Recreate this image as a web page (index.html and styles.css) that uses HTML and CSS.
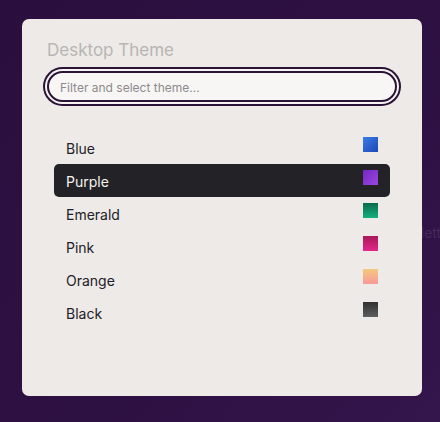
FILE: index.html
```html
<!DOCTYPE html>
<html lang="en">
<head>
    <meta charset="UTF-8">
    <meta name="viewport" content="width=device-width, initial-scale=1.0">
    <title>Desktop Theme</title>
    <link rel="stylesheet" href="styles.css">
</head>
<body>
    <span class="behind">Palette</span>
    <div class="panel">
        <h1 class="title">Desktop Theme</h1>
        <input type="text" class="filter" placeholder="Filter and select theme...">
        <ul class="themes">
            <li class="theme"><span>Blue</span><i class="swatch blue"></i></li>
            <li class="theme active"><span>Purple</span><i class="swatch purple"></i></li>
            <li class="theme"><span>Emerald</span><i class="swatch emerald"></i></li>
            <li class="theme"><span>Pink</span><i class="swatch pink"></i></li>
            <li class="theme"><span>Orange</span><i class="swatch orange"></i></li>
            <li class="theme"><span>Black</span><i class="swatch black"></i></li>
        </ul>
    </div>
</body>
</html>
```

FILE: styles.css
```css
html, body {
  height: 100%;
}

body {
  margin: 0;
  background: linear-gradient(135deg, #2a0f3e 0%, #2e1143 60%, #34154c 100%);
  font-family: Inter, "Noto Sans", sans-serif;
  padding: 19px 18px 0 22px;
  box-sizing: border-box;
  position: relative;
  overflow: hidden;
}

.behind {
  position: absolute;
  left: 404px;
  top: 224px;
  font-size: 14px;
  color: #46295d;
}

.panel {
  position: relative;
  width: 400px;
  height: 377px;
  box-sizing: border-box;
  background-color: #edeae7;
  border-radius: 7px;
  padding: 21px 25px;
}

.title {
  margin: 0;
  font-size: 17px;
  line-height: 20px;
  font-weight: 400;
  color: #b9b5b3;
}

.filter {
  display: block;
  width: 100%;
  height: 31px;
  margin-top: 11px;
  box-sizing: border-box;
  border: 2px solid #2a1336;
  border-radius: 16px;
  box-shadow: 0 0 0 2px #f6f3f2, 0 0 0 4px #2a1336;
  background-color: #f8f6f5;
  padding: 1px 11px 0;
  font-family: inherit;
  font-size: 12px;
  outline: none;
}

.filter::placeholder {
  color: #8c8a8c;
}

.themes {
  list-style: none;
  margin: 29px 7px 0;
  padding: 0;
}

.theme {
  display: flex;
  justify-content: space-between;
  align-items: center;
  height: 33px;
  padding: 0 12px;
  border-radius: 5px;
  font-size: 14px;
  color: #232027;
}

.theme span {
  padding-top: 2px;
}

.theme.active {
  background-color: #232226;
  color: #f4f2f0;
}

.swatch {
  width: 15px;
  height: 15px;
  align-self: flex-start;
  margin-top: 6px;
}

.blue { background: linear-gradient(135deg, #3a7ce6, #1d48b5); }
.purple { background: linear-gradient(135deg, #7426c4, #9c48e2); }
.emerald { background: linear-gradient(180deg, #0b6a4c, #15b07e); }
.pink { background: linear-gradient(180deg, #a9185a, #e3288a); }
.orange { background: linear-gradient(180deg, #f4c97d, #f99898); }
.black { background: linear-gradient(180deg, #303030, #5e5e5e); }
```
